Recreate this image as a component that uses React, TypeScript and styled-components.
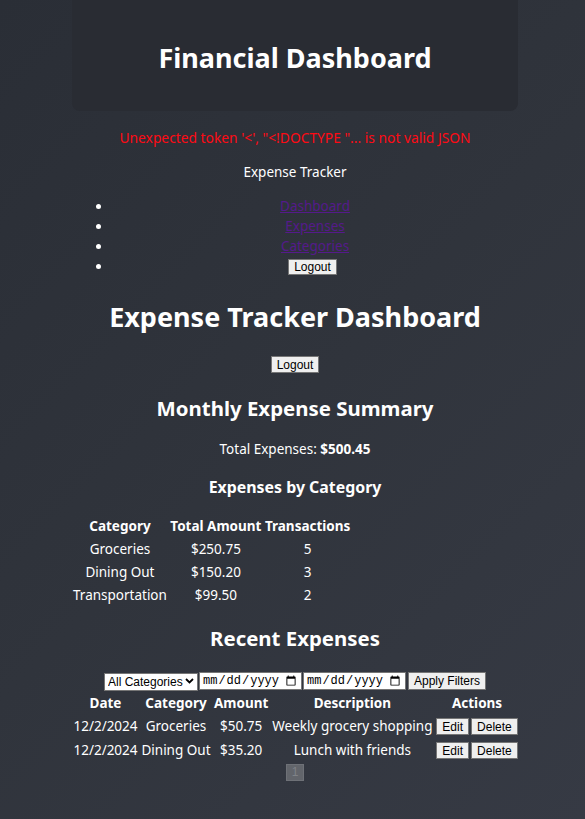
import React from "react";
import styled, { createGlobalStyle } from "styled-components";

const GlobalStyle = createGlobalStyle`
  html, body {
    margin: 0;
    padding: 0;
  }
  body {
    min-height: 819px;
    background: linear-gradient(135deg, #2a2e36 0%, #30343c 50%, #363a44 100%);
    color: #ffffff;
    font-family: "Noto Sans", "Open Sans", sans-serif;
  }
`;

const Page = styled.div`
  width: 446px;
  margin-left: 72px;
  text-align: center;
  font-size: 13.5px;
  padding-bottom: 36px;
`;

const Header = styled.header`
  height: 111px;
  border-radius: 0 0 8px 8px;
  background: #292c33;
  display: flex;
  align-items: center;
  justify-content: center;
  padding-top: 4px;
  box-sizing: border-box;
`;

const HeaderTitle = styled.h1`
  margin: 0;
  font-size: 27px;
  line-height: 36px;
  font-weight: 700;
`;

const ErrorText = styled.p`
  margin: 17px 0 0;
  line-height: 20px;
  font-size: 13.8px;
  color: #ff0a14;
`;

const NavTitle = styled.p`
  margin: 14px 0 0;
  line-height: 20px;
`;

const NavList = styled.ul`
  margin: 14px 0 0;
  padding-left: 40px;
  list-style: disc;
`;

const NavItem = styled.li`
  line-height: 20px;
  height: 20px;
`;

const NavLink = styled.a`
  color: #551a8b;
  text-decoration: underline;
`;

const Btn = styled.button`
  font-family: "Liberation Sans", Arial, sans-serif;
  font-size: 12px;
  line-height: 14px;
  height: 17px;
  padding: 0 5px;
  color: #000;
  background: #efefef;
  border: 1px solid #767676;
  border-radius: 0;
  box-sizing: border-box;
  vertical-align: middle;
  cursor: pointer;
`;

const NavLogout = styled(Btn)`
  height: 16px;
  line-height: 13px;
  margin-left: -5px;
`;

const MainTitle = styled.h1`
  margin: 21px 0 0;
  font-size: 27px;
  line-height: 40px;
  font-weight: 700;
`;

const TopLogoutRow = styled.div`
  margin-top: 19px;
  display: flex;
  justify-content: center;
`;

const SectionTitle = styled.h2`
  margin: 19px 0 0;
  font-size: 20.4px;
  line-height: 32px;
  font-weight: 700;
`;

const RecentTitle = styled(SectionTitle)`
  margin-top: 14.5px;
`;

const Total = styled.p`
  margin: 15px 0 0;
  line-height: 20px;
`;

const SubTitle = styled.h3`
  margin: 16px 0 0;
  font-size: 15.9px;
  line-height: 24px;
  font-weight: 700;
`;

const Table = styled.table<{ $mt: number }>`
  margin-top: ${(p) => p.$mt}px;
  margin-left: -1px;
  border-collapse: separate;
  border-spacing: 2px;
  font-size: 13.5px;
`;

const Th = styled.th<{ $w: number }>`
  width: ${(p) => p.$w}px;
  min-width: ${(p) => p.$w}px;
  padding: 1px 0;
  height: 19px;
  line-height: 19px;
  font-weight: 700;
  white-space: nowrap;
  text-align: center;
`;

const Td = styled.td<{ $h?: number }>`
  padding: 1px 0;
  height: ${(p) => p.$h ?? 19}px;
  line-height: 19px;
  white-space: nowrap;
  text-align: center;
  vertical-align: middle;
`;

const ActionsCell = styled.div`
  display: flex;
  gap: 2px;
  justify-content: center;
`;

const Filters = styled.div`
  margin-top: 18px;
  display: flex;
  justify-content: center;
  gap: 1px;
  height: 18px;
`;

const SelectWrap = styled.div`
  position: relative;
  width: 94px;
  height: 18px;
`;

const Select = styled.select`
  appearance: none;
  -webkit-appearance: none;
  width: 100%;
  height: 18px;
  box-sizing: border-box;
  font-family: "Liberation Sans", Arial, sans-serif;
  font-size: 12px;
  line-height: 16px;
  padding: 0 14px 0 3px;
  color: #000;
  background: #fff;
  border: 1px solid #767676;
  border-radius: 0;
`;

const Chevron = styled.svg`
  position: absolute;
  right: 4px;
  top: 6px;
  width: 9px;
  height: 6px;
  pointer-events: none;
`;

const DateInput = styled.input`
  width: 103px;
  height: 18px;
  box-sizing: border-box;
  font-family: "Liberation Mono", monospace;
  font-size: 12px;
  padding: 0 2px;
  color: #000;
  background: #fff;
  border: 1px solid #767676;
  border-radius: 0;
`;

const FilterBtn = styled(Btn)`
  height: 18px;
  margin-left: 1px;
`;

const Pagination = styled.div`
  display: flex;
  justify-content: center;
  margin-top: 0.5px;
`;

const PageBtn = styled.button`
  width: 18px;
  height: 17px;
  box-sizing: border-box;
  padding: 0;
  font-family: "Liberation Sans", Arial, sans-serif;
  font-size: 12px;
  line-height: 15px;
  color: #7f8287;
  background: #62656b;
  border: 1px solid #6e7177;
  border-radius: 0;
`;

const categories = [
  { name: "Groceries", total: "$250.75", count: 5 },
  { name: "Dining Out", total: "$150.20", count: 3 },
  { name: "Transportation", total: "$99.50", count: 2 },
];

const expenses = [
  { date: "12/2/2024", category: "Groceries", amount: "$50.75", description: "Weekly grocery shopping" },
  { date: "12/2/2024", category: "Dining Out", amount: "$35.20", description: "Lunch with friends" },
];

export default function App() {
  return (
    <>
      <GlobalStyle />
      <Page>
        <Header>
          <HeaderTitle>Financial Dashboard</HeaderTitle>
        </Header>
        <ErrorText>Unexpected token '&lt;', "&lt;!DOCTYPE "... is not valid JSON</ErrorText>
        <NavTitle>Expense Tracker</NavTitle>
        <NavList>
          <NavItem><NavLink href="#dashboard">Dashboard</NavLink></NavItem>
          <NavItem><NavLink href="#expenses">Expenses</NavLink></NavItem>
          <NavItem><NavLink href="#categories">Categories</NavLink></NavItem>
          <NavItem><NavLogout>Logout</NavLogout></NavItem>
        </NavList>
        <MainTitle>Expense Tracker Dashboard</MainTitle>
        <TopLogoutRow>
          <Btn>Logout</Btn>
        </TopLogoutRow>
        <SectionTitle>Monthly Expense Summary</SectionTitle>
        <Total>
          Total Expenses: <strong>$500.45</strong>
        </Total>
        <SubTitle>Expenses by Category</SubTitle>
        <Table $mt={14.5}>
          <thead>
            <tr>
              <Th $w={92}>Category</Th>
              <Th $w={94}>Total Amount</Th>
              <Th $w={84}>Transactions</Th>
            </tr>
          </thead>
          <tbody>
            {categories.map((c) => (
              <tr key={c.name}>
                <Td>{c.name}</Td>
                <Td>{c.total}</Td>
                <Td>{c.count}</Td>
              </tr>
            ))}
          </tbody>
        </Table>
        <RecentTitle>Recent Expenses</RecentTitle>
        <Filters>
          <SelectWrap>
            <Select defaultValue="all">
              <option value="all">All Categories</option>
              <option value="groceries">Groceries</option>
              <option value="dining">Dining Out</option>
              <option value="transport">Transportation</option>
            </Select>
            <Chevron viewBox="0 0 9 6" aria-hidden="true">
              <path d="M1 1 L4.5 4.5 L8 1" fill="none" stroke="#000" strokeWidth="1.8" />
            </Chevron>
          </SelectWrap>
          <DateInput type="date" />
          <DateInput type="date" />
          <FilterBtn>Apply Filters</FilterBtn>
        </Filters>
        <Table $mt={0.5}>
          <thead>
            <tr>
              <Th $w={65}>Date</Th>
              <Th $w={72}>Category</Th>
              <Th $w={54}>Amount</Th>
              <Th $w={164}>Description</Th>
              <Th $w={81}>Actions</Th>
            </tr>
          </thead>
          <tbody>
            {expenses.map((e, i) => (
              <tr key={i}>
                <Td $h={20}>{e.date}</Td>
                <Td $h={20}>{e.category}</Td>
                <Td $h={20}>{e.amount}</Td>
                <Td $h={20}>{e.description}</Td>
                <Td $h={20}>
                  <ActionsCell>
                    <Btn>Edit</Btn>
                    <Btn>Delete</Btn>
                  </ActionsCell>
                </Td>
              </tr>
            ))}
          </tbody>
        </Table>
        <Pagination>
          <PageBtn disabled>1</PageBtn>
        </Pagination>
      </Page>
    </>
  );
}
